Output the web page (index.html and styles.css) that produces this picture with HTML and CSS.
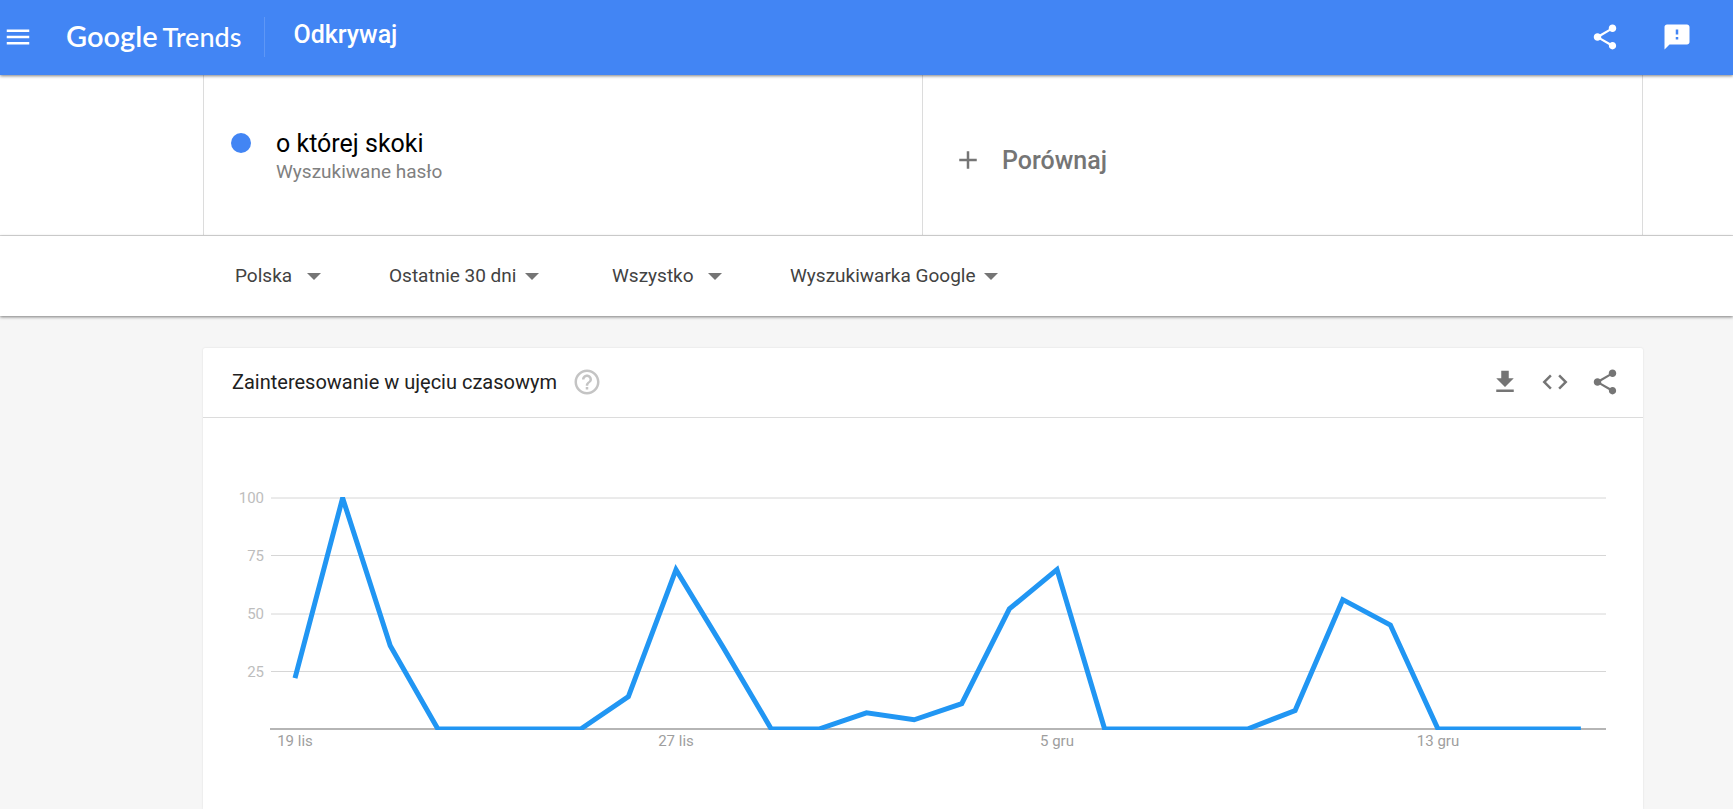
FILE: index.html
```html
<!DOCTYPE html>
<html lang="pl">
<head>
  <meta charset="UTF-8">
  <meta name="viewport" content="width=device-width, initial-scale=1.0">
  <title>Google Trends</title>
  <link rel="stylesheet" href="styles.css">
</head>
<body>
  <header class="topbar">
    <button type="button" class="icon-btn" aria-label="Menu">
      <svg viewBox="0 0 24 24"><path d="M3 18h18v-2H3v2zm0-5h18v-2H3v2zm0-7v2h18V6H3z"/></svg>
    </button>
    <a href="#" class="logo"><span class="logo-google">Google</span><span class="logo-trends">Trends</span></a>
    <h1 class="page-name">Odkrywaj</h1>
    <div class="topbar-actions">
      <button type="button" class="icon-btn" aria-label="Udostępnij">
        <svg viewBox="0 0 24 24"><path d="M18 16.08c-.76 0-1.44.3-1.96.77L8.91 12.7c.05-.23.09-.46.09-.7s-.04-.47-.09-.7l7.05-4.11c.54.5 1.25.81 2.04.81 1.66 0 3-1.34 3-3s-1.34-3-3-3-3 1.34-3 3c0 .24.04.47.09.7L8.04 9.81C7.5 9.31 6.79 9 6 9c-1.66 0-3 1.34-3 3s1.34 3 3 3c.79 0 1.5-.31 2.04-.81l7.12 4.16c-.05.21-.08.43-.08.65 0 1.61 1.31 2.92 2.92 2.92s2.92-1.31 2.92-2.92-1.31-2.92-2.92-2.92z"/></svg>
      </button>
      <button type="button" class="icon-btn" aria-label="Prześlij opinię">
        <svg viewBox="0 0 24 24"><path d="M20 2H4c-1.1 0-1.99.9-1.99 2L2 22l4-4h14c1.1 0 2-.9 2-2V4c0-1.1-.9-2-2-2zm-7 12h-2v-2h2v2zm0-4h-2V6h2v4z"/></svg>
      </button>
    </div>
  </header>

  <section class="terms">
    <div class="terms-row">
      <div class="term">
        <span class="term-dot"></span>
        <div>
          <p class="term-name">o której skoki</p>
          <p class="term-type">Wyszukiwane hasło</p>
        </div>
      </div>
      <button type="button" class="compare">
        <svg class="icon" viewBox="0 0 24 24"><path d="M19 13h-6v6h-2v-6H5v-2h6V5h2v6h6v2z"/></svg>
        Porównaj
      </button>
    </div>
  </section>

  <form class="filters">
    <div class="field field-short">
      <select aria-label="Kraj"><option>Polska</option></select>
      <span class="arrow"></span>
    </div>
    <div class="field">
      <select aria-label="Okres"><option>Ostatnie 30 dni</option></select>
      <span class="arrow"></span>
    </div>
    <div class="field field-short">
      <select aria-label="Kategoria"><option>Wszystko</option></select>
      <span class="arrow"></span>
    </div>
    <div class="field">
      <select aria-label="Typ wyszukiwania"><option>Wyszukiwarka Google</option></select>
      <span class="arrow"></span>
    </div>
  </form>

  <main>
    <section class="card">
      <div class="card-header">
        <h2 class="card-title">Zainteresowanie w ujęciu czasowym</h2>
        <button type="button" class="icon-btn help" aria-label="Pomoc">
          <svg viewBox="0 0 24 24"><path d="M11 18h2v-2h-2v2zm1-16C6.48 2 2 6.48 2 12s4.48 10 10 10 10-4.48 10-10S17.52 2 12 2zm0 18c-4.41 0-8-3.59-8-8s3.59-8 8-8 8 3.59 8 8-3.59 8-8 8zm0-14c-2.21 0-4 1.79-4 4h2c0-1.1.9-2 2-2s2 .9 2 2c0 2-3 1.75-3 5h2c0-2.25 3-2.5 3-5 0-2.21-1.79-4-4-4z"/></svg>
        </button>
        <div class="card-actions">
          <button type="button" class="icon-btn" aria-label="Pobierz CSV">
            <svg viewBox="0 0 24 24"><path d="M19 9h-4V3H9v6H5l7 7 7-7zM5 18v2h14v-2H5z"/></svg>
          </button>
          <button type="button" class="icon-btn" aria-label="Umieść na stronie">
            <svg viewBox="0 0 24 24"><path d="M9.4 16.6L4.8 12l4.6-4.6L8 6l-6 6 6 6 1.4-1.4zm5.2 0l4.6-4.6-4.6-4.6L16 6l6 6-6 6-1.4-1.4z"/></svg>
          </button>
          <button type="button" class="icon-btn" aria-label="Udostępnij wykres">
            <svg viewBox="0 0 24 24"><path d="M18 16.08c-.76 0-1.44.3-1.96.77L8.91 12.7c.05-.23.09-.46.09-.7s-.04-.47-.09-.7l7.05-4.11c.54.5 1.25.81 2.04.81 1.66 0 3-1.34 3-3s-1.34-3-3-3-3 1.34-3 3c0 .24.04.47.09.7L8.04 9.81C7.5 9.31 6.79 9 6 9c-1.66 0-3 1.34-3 3s1.34 3 3 3c.79 0 1.5-.31 2.04-.81l7.12 4.16c-.05.21-.08.43-.08.65 0 1.61 1.31 2.92 2.92 2.92s2.92-1.31 2.92-2.92-1.31-2.92-2.92-2.92z"/></svg>
          </button>
        </div>
      </div>

      <svg class="chart" viewBox="0 0 1440 391" role="img" aria-label="Zainteresowanie w ujęciu czasowym">
        <clipPath id="plot"><rect x="67" y="79" width="1335" height="233"/></clipPath>
        <g class="grid">
          <path d="M68 80H1403M68 137.5H1403M68 196H1403M68 253.5H1403"/>
        </g>
        <path class="axis" d="M67 311H1403"/>
        <g class="y-labels">
          <text x="61" y="85">100</text>
          <text x="61" y="143">75</text>
          <text x="61" y="201">50</text>
          <text x="61" y="259">25</text>
        </g>
        <g class="x-labels">
          <text x="92" y="328">19 lis</text>
          <text x="473" y="328">27 lis</text>
          <text x="854" y="328">5 gru</text>
          <text x="1235" y="328">13 gru</text>
        </g>
        <polyline class="series" clip-path="url(#plot)" points=""/>
      </svg>
    </section>
  </main>

  <script>
    // one value per day, 19 lis - 16 gru
    const values = [22, 100, 36, 0, 0, 0, 0, 14, 69, 35, 0, 0, 7, 4, 11, 52, 69, 0, 0, 0, 0, 8, 56, 45, 0, 0, 0, 0];
    const step = (1235 - 92) / 24;
    const points = values.map((v, i) => `${92 + i * step},${311 - v * 2.31}`);
    document.querySelector('.series').setAttribute('points', points.join(' '));
  </script>
</body>
</html>
```

FILE: styles.css
```css
* {
  margin: 0;
  padding: 0;
  box-sizing: border-box;
}

body {
  font-family: Roboto, sans-serif;
  background-color: #f6f6f6;
  color: #212121;
}

button {
  border: none;
  background: none;
  font: inherit;
  color: inherit;
  cursor: pointer;
}

svg {
  display: block;
  fill: currentColor;
}

.icon,
.icon-btn {
  width: 30px;
  height: 30px;
  flex-shrink: 0;
}

/* top bar */
.topbar {
  position: relative;
  display: flex;
  align-items: center;
  height: 75px;
  padding: 0 41px 2px 3px;
  background-color: #4285f4;
  color: #fff;
  box-shadow: 0 1px 3px rgba(0, 0, 0, 0.5);
}

.logo {
  display: flex;
  align-items: baseline;
  gap: 5px;
  height: 40px;
  margin-left: 33px;
  padding-right: 23px;
  border-right: 1px solid #5e97f6;
  font-family: Lato, sans-serif;
  line-height: 38px;
  color: #fff;
  text-decoration: none;
}

.logo-google {
  font-size: 29px;
  font-weight: 600;
}

.logo-trends {
  font-size: 27px;
  font-weight: 500;
}

.page-name {
  margin-left: 28px;
  padding-bottom: 4px;
  font-size: 25px;
  font-weight: 500;
  line-height: 32px;
}

.topbar-actions {
  display: flex;
  gap: 42px;
  margin-left: auto;
}

/* search terms */
.terms {
  padding: 0 90px 0 203px;
  background-color: #fff;
  border-bottom: 1px solid #dcdcdc;
}

.terms-row {
  display: grid;
  grid-template-columns: 1fr 1fr;
  height: 160px;
  border-left: 1px solid #dcdcdc;
  border-right: 1px solid #dcdcdc;
}

.term {
  display: flex;
  gap: 25px;
  padding: 55px 28px 0 27px;
  border-right: 1px solid #dcdcdc;
}

.term-dot {
  width: 20px;
  height: 20px;
  margin-top: 3px;
  border-radius: 50%;
  background-color: #4285f4;
}

.term-name {
  font-size: 25px;
  line-height: 28px;
  color: #000;
}

.term-type {
  font-size: 19px;
  line-height: 28px;
  color: #808080;
}

.compare {
  display: flex;
  align-items: center;
  gap: 19px;
  padding: 10px 30px 0;
  font-size: 25px;
  font-weight: 500;
  color: #757575;
}

/* filters */
.filters {
  position: relative;
  display: grid;
  grid-template-columns: 154px 223px 178px auto;
  align-items: center;
  height: 80px;
  padding: 0 90px 0 235px;
  background-color: #fff;
  box-shadow: 0 1px 3px rgba(0, 0, 0, 0.5);
}

.field {
  display: flex;
  align-items: center;
  gap: 8px;
}

.field select {
  appearance: none;
  border: none;
  background: none;
  font-family: inherit;
  font-size: 19px;
  line-height: 24px;
  color: #424242;
}

.field-short select {
  padding-right: 6px;
}

.arrow {
  border: 7px solid transparent;
  border-top-color: #757575;
  border-bottom: 0;
}

/* chart card */
main {
  padding: 32px 90px 0 203px;
}

.card {
  background-color: #fff;
  border-radius: 2px 2px 0 0;
  box-shadow: 0 0 2px rgba(0, 0, 0, 0.12);
}

.card-header {
  display: flex;
  align-items: center;
  height: 70px;
  padding: 0 23px 2px 29px;
  border-bottom: 1px solid #dcdcdc;
}

.card-title {
  font-size: 20px;
  font-weight: 400;
  line-height: 28px;
}

.help {
  margin-left: 15px;
  color: #c4c4c4;
}

.card-actions {
  display: flex;
  gap: 20px;
  margin-left: auto;
  color: #757575;
}

.chart {
  width: 100%;
  font-size: 15px;
}

.grid {
  stroke: #d6d6d6;
}

.axis {
  stroke: #b5b5b5;
  stroke-width: 2;
}

.y-labels {
  fill: #bdbdbd;
  text-anchor: end;
}

.x-labels {
  fill: #9e9e9e;
  text-anchor: middle;
}

.series {
  fill: none;
  stroke: #2196f3;
  stroke-width: 5;
}
```
